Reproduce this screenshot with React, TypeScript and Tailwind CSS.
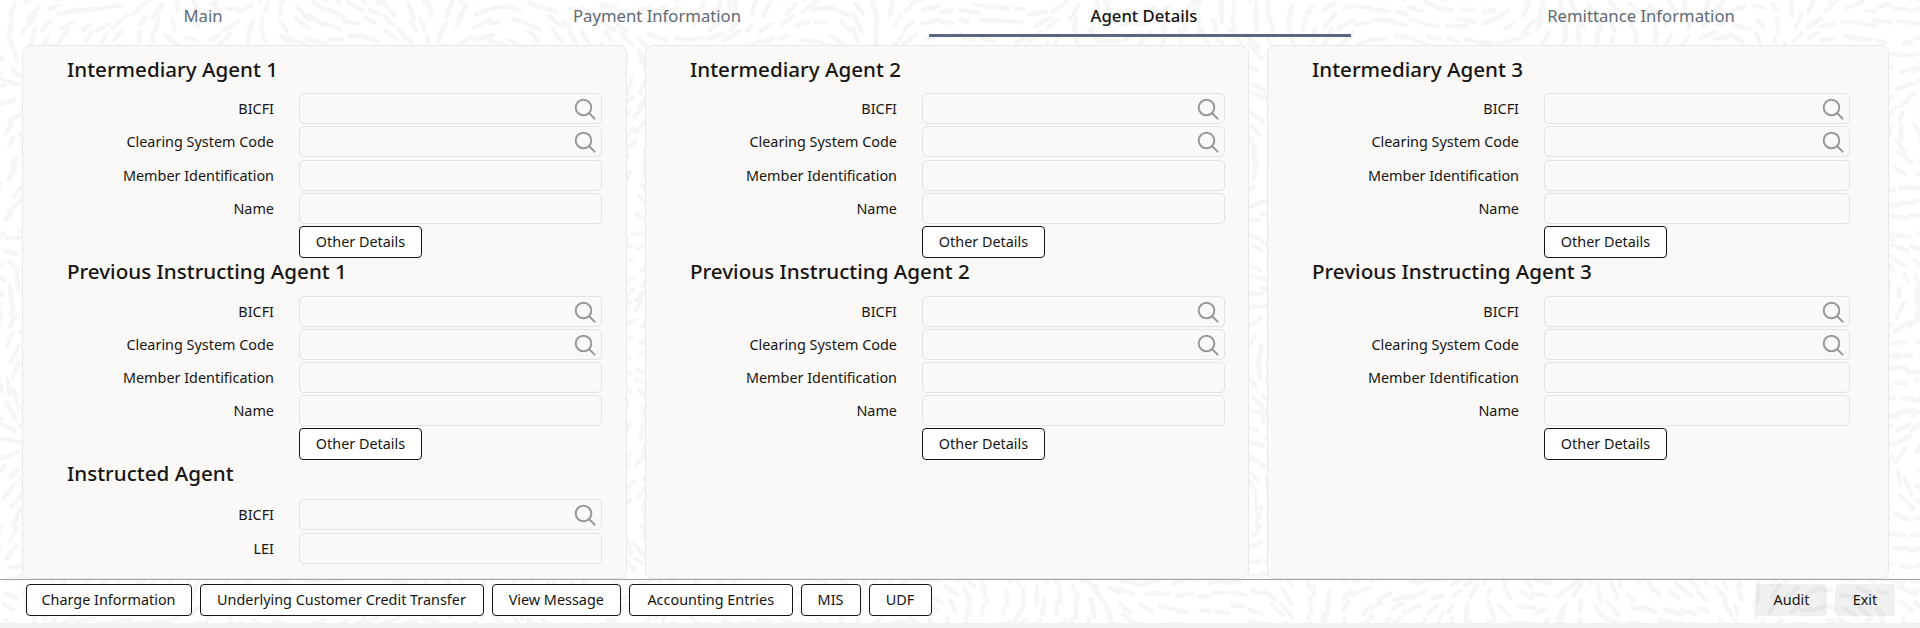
/**
 * Agent Details tab of the payment transaction form.
 */
import { useMemo } from 'react';

const FONT = "font-['Noto_Sans',sans-serif]";

function SearchIcon() {
  return (
    <svg width="22" height="22" viewBox="0 0 22 22" fill="none" stroke="#9a9895" strokeWidth="2" strokeLinecap="round">
      <circle cx="9.5" cy="9.5" r="7.8" />
      <line x1="15.2" y1="15.2" x2="20.6" y2="20.6" />
    </svg>
  );
}

// rice grain texture behind the page
function Texture() {
  const d = useMemo(() => {
    let seed = 12345;
    const rnd = () => {
      seed = (seed * 1664525 + 1013904223) % 4294967296;
      return seed / 4294967296;
    };
    const parts: string[] = [];
    for (let y = -10; y < 640; y += 15) {
      for (let x = -10; x < 1930; x += 18) {
        const px = x + rnd() * 10;
        const py = y + rnd() * 8;
        const a = Math.sin(px / 70) * 1.7 + Math.cos(py / 55 + px / 160) * 1.6 + rnd() * 0.3;
        const len = 4 + rnd() * 6;
        const dx = Math.cos(a) * len;
        const dy = Math.sin(a) * len;
        parts.push(`M${(px - dx).toFixed(1)} ${(py - dy).toFixed(1)}L${(px + dx).toFixed(1)} ${(py + dy).toFixed(1)}`);
      }
    }
    return parts.join('');
  }, []);
  return (
    <svg className="absolute inset-0" width="1920" height="628" fill="none">
      <path d={d} stroke="#f6f6f6" strokeWidth="4.5" strokeLinecap="round" />
    </svg>
  );
}

function OtherDetails() {
  return (
    <button className="h-[32px] w-[123px] rounded-[4px] border border-[#161513] bg-white pb-[1px] text-[14.4px] text-[#161513]">
      Other Details
    </button>
  );
}

function Field({ label, search }: { label: string; search?: boolean }) {
  return (
    <div className="flex h-[31px] items-center">
      <div className="w-[251.5px] pt-[1px] text-right text-[14.4px] text-[#161513]">{label}</div>
      <div className="ml-[25px] flex h-full flex-1 items-center justify-end rounded-[5px] border border-[#e4e2de] pr-[5px]">
        {search && <SearchIcon />}
      </div>
    </div>
  );
}

function Heading({ children, className }: { children: string; className: string }) {
  return <h2 className={`h-[28px] pl-[44.5px] text-[20.6px] leading-[26px] font-medium text-[#161513] ${className}`}>{children}</h2>;
}

function AgentBlock({ title, first }: { title: string; first?: boolean }) {
  return (
    <>
      <Heading className={first ? 'mb-[9px]' : 'mb-[10px]'}>{title}</Heading>
      <div className={`flex flex-col ${first ? 'gap-[2.25px]' : 'gap-[2px]'}`}>
        <Field label="BICFI" search />
        <Field label="Clearing System Code" search />
        <Field label="Member Identification" />
        <Field label="Name" />
        <div className="pl-[276.5px]">
          <OtherDetails />
        </div>
      </div>
    </>
  );
}

function Panel({ n, width, pr, children }: { n: number; width: string; pr: string; children?: React.ReactNode }) {
  return (
    <div className={`${width} ${pr} rounded-[8px] border border-[#ebe9e6] bg-[#faf9f7] pt-[10px]`}>
      <AgentBlock title={`Intermediary Agent ${n}`} first />
      <AgentBlock title={`Previous Instructing Agent ${n}`} />
      {children}
    </div>
  );
}

function FooterButton({ children, className }: { children: string; className: string }) {
  return (
    <button className={`h-[32px] rounded-[4px] border border-[#161513] bg-white text-[14.4px] text-[#161513] ${className}`}>
      {children}
    </button>
  );
}

export default function App() {
  return (
    <div className={`relative h-[628px] w-[1920px] overflow-hidden bg-white ${FONT}`}>
      <Texture />
      <div className="relative flex h-full flex-col">
        <div className="flex h-[37px] text-[16.7px] text-[#5f6b75]">
          <div className="w-[406px] pt-[3px] text-center">Main</div>
          <div className="w-[502px] pt-[3px] text-center">Payment Information</div>
          <div className="ml-[21px] w-[422px] border-b-[3px] border-[#5d6585] pt-[3px] pl-[8px] text-center font-medium text-[#161513]">
            Agent Details
          </div>
          <div className="ml-[11px] w-[558px] pt-[3px] text-center">Remittance Information</div>
        </div>

        <div className="mt-[8px] grid h-[534px] grid-cols-[605px_604px_622px] gap-x-[18px] pl-[21.5px]">
          <Panel n={1} width="w-[605px]" pr="pr-[24px]">
            <Heading className="mb-[11px]">Instructed Agent</Heading>
            <div className="flex flex-col gap-[3px]">
              <Field label="BICFI" search />
              <Field label="LEI" />
            </div>
          </Panel>
          <Panel n={2} width="w-[604px]" pr="pr-[23px]" />
          <Panel n={3} width="w-[622px]" pr="pr-[38px]" />
        </div>

        <div className="flex h-[44px] items-start justify-between border-t border-[#a3a3a3] pt-[4px] pl-[25.5px] pr-[25px]">
          <div className="flex gap-[8px]">
            <FooterButton className="w-[166px]">Charge Information</FooterButton>
            <FooterButton className="w-[284px]">Underlying Customer Credit Transfer</FooterButton>
            <FooterButton className="w-[129.5px]">View Message</FooterButton>
            <FooterButton className="w-[163.5px]">Accounting Entries</FooterButton>
            <FooterButton className="w-[60px]">MIS</FooterButton>
            <FooterButton className="w-[63px]">UDF</FooterButton>
          </div>
          <div className="flex gap-[8px]">
            <button className="h-[32px] w-[71px] rounded-[4px] bg-black/[0.06] text-[14.4px] text-[#161513]">Audit</button>
            <button className="h-[32px] w-[60px] rounded-[4px] bg-black/[0.06] text-[14.4px] text-[#161513]">Exit</button>
          </div>
        </div>
        <div className="h-[5px] bg-[#f1f1f1]" />
      </div>
    </div>
  );
}
